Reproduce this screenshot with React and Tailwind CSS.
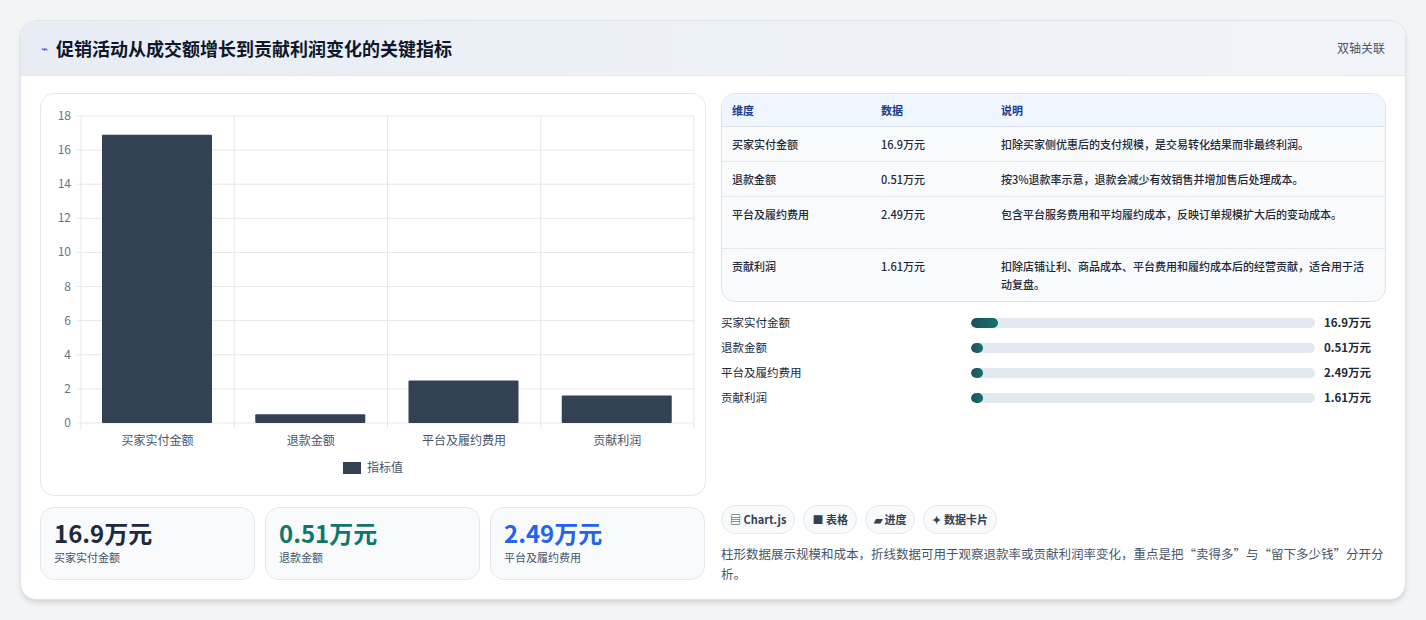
export default function App() {
  const font = { fontFamily: '"Noto Sans CJK SC", "Noto Sans", sans-serif' };
  const bars = [
    { n: "买家实付金额", v: 16.9 },
    { n: "退款金额", v: 0.51 },
    { n: "平台及履约费用", v: 2.49 },
    { n: "贡献利润", v: 1.61 },
  ];
  const rows = [
    ["买家实付金额", "16.9万元", "扣除买家侧优惠后的支付规模，是交易转化结果而非最终利润。"],
    ["退款金额", "0.51万元", "按3%退款率示意，退款会减少有效销售并增加售后处理成本。"],
    ["平台及履约费用", "2.49万元", "包含平台服务费用和平均履约成本，反映订单规模扩大后的变动成本。"],
    ["贡献利润", "1.61万元", "扣除店铺让利、商品成本、平台费用和履约成本后的经营贡献，适合用于活动复盘。"],
  ];
  const L = 40, T = 22, B = 329, R = 653;
  const h = (B - T) / 18;
  const cw = (R - L) / 4;
  return (
    <div className="min-h-[620px] w-[1426px] bg-[#f3f4f6] pt-[20px] px-[20px]" style={font}>
      <div className="w-[1386px] h-[580px] bg-white rounded-[16px] border border-[#dfe4ec] shadow-md overflow-hidden">
        <div className="h-[55px] flex items-center justify-between px-[20px] bg-gradient-to-r from-[#e8edf5] to-[#f1f4f9] border-b border-[#e3e8f0]">
          <div className="flex items-center gap-[8px]">
            <span className="text-[#3b5bdb] text-[12px]">⌁</span>
            <span className="text-[18px] font-bold text-[#0f172a]">促销活动从成交额增长到贡献利润变化的关键指标</span>
          </div>
          <span className="text-[12px] text-[#475569]">双轴关联</span>
        </div>
        <div className="flex gap-[15px] px-[19px] pt-[17px]">
          <div className="w-[666px] flex flex-col gap-[11px]">
            <div className="h-[403px] rounded-[14px] border border-[#e2e8f0] bg-white">
              <svg width="664" height="401" style={{ fontFamily: '"Noto Sans CJK SC", sans-serif' }}>
                {Array.from({ length: 10 }).map((_, i) => {
                  const y = B - i * 2 * h;
                  return (
                    <g key={i}>
                      <line x1={L - 4} x2={R} y1={y} y2={y} stroke="#e5e7eb" />
                      <text x={L - 10} y={y + 4} textAnchor="end" fontSize="12" fill="#64748b">{i * 2}</text>
                    </g>
                  );
                })}
                {[0, 1, 2, 3, 4].map((i) => (
                  <line key={i} x1={L + i * cw} x2={L + i * cw} y1={T} y2={B + 6} stroke="#e5e7eb" />
                ))}
                {bars.map((b, i) => {
                  const x = L + i * cw + 21;
                  const bh = b.v * h;
                  return (
                    <g key={b.n}>
                      <rect x={x} y={B - bh} width={110} height={bh} fill="#334155" rx="1" />
                      <text x={L + i * cw + cw / 2} y={351} textAnchor="middle" fontSize="12" fill="#475569">{b.n}</text>
                    </g>
                  );
                })}
                <rect x={302} y={368} width={18} height={12} fill="#334155" />
                <text x={326} y={378} fontSize="12" fill="#475569">指标值</text>
              </svg>
            </div>
            <div className="flex gap-[10px]">
              {[
                ["16.9万元", "买家实付金额", "text-[#1e293b]"],
                ["0.51万元", "退款金额", "text-[#0f766e]"],
                ["2.49万元", "平台及履约费用", "text-[#2563eb]"],
              ].map(([v, l, c]) => (
                <div key={l} className="w-[215px] h-[73px] rounded-[14px] border border-[#e2e8f0] bg-[#f8fafc] px-[13px] pt-[9px]">
                  <div className={`text-[24px] font-bold leading-[32px] ${c}`}>{v}</div>
                  <div className="text-[11px] text-[#475569] leading-[16px]">{l}</div>
                </div>
              ))}
            </div>
          </div>
          <div className="w-[667px] flex flex-col">
            <div className="rounded-[14px] border border-[#dbe3ee] overflow-hidden bg-[#f8fafc] text-[11px]">
              <div className="flex h-[33px] items-center bg-[#eff6ff] border-b border-[#dbe3ee] font-bold text-[#1e3a8a]">
                <div className="w-[159px] pl-[10px]">维度</div>
                <div className="w-[120px]">数据</div>
                <div className="flex-1">说明</div>
              </div>
              {rows.map((r, i) => (
                <div key={i} className={`flex py-[8px] leading-[18px] text-[#1e293b] font-medium ${i < 3 ? "border-b border-[#e2e8f0]" : ""} ${i === 2 || i === 3 ? "min-h-[52px]" : "min-h-[35px]"}`}>
                  <div className="w-[159px] pl-[10px]">{r[0]}</div>
                  <div className="w-[120px]">{r[1]}</div>
                  <div className="flex-1 pr-[14px]">{r[2]}</div>
                </div>
              ))}
            </div>
            <div className="mt-[12px] flex flex-col gap-[7px]">
              {bars.map((b, i) => (
                <div key={b.n} className="flex items-center h-[18px] text-[11.5px]">
                  <div className="w-[250px] text-[#1e293b]">{b.n}</div>
                  <div className="w-[344px] h-[10px] rounded-full bg-[#e2e8f0] overflow-hidden">
                    <div className="h-full rounded-full bg-gradient-to-r from-[#1e4d5c] to-[#0f766e]" style={{ width: i === 0 ? 27 : 12 }} />
                  </div>
                  <div className="ml-[9px] font-bold text-[#1e293b]">{b.v}万元</div>
                </div>
              ))}
            </div>
            <div className="mt-[98px] flex gap-[8px]">
              {["▤ Chart.js", "■ 表格", "▰ 进度", "✦ 数据卡片"].map((t) => (
                <span key={t} className="h-[29px] px-[8px] flex items-center rounded-full border border-[#e2e8f0] bg-[#f8fafc] text-[11px] font-bold text-[#334155]">{t}</span>
              ))}
            </div>
            <p className="mt-[10px] text-[12.5px] leading-[20px] text-[#475569]">
              柱形数据展示规模和成本，折线数据可用于观察退款率或贡献利润率变化，重点是把“卖得多”与“留下多少钱”分开分析。
            </p>
          </div>
        </div>
      </div>
    </div>
  );
}
